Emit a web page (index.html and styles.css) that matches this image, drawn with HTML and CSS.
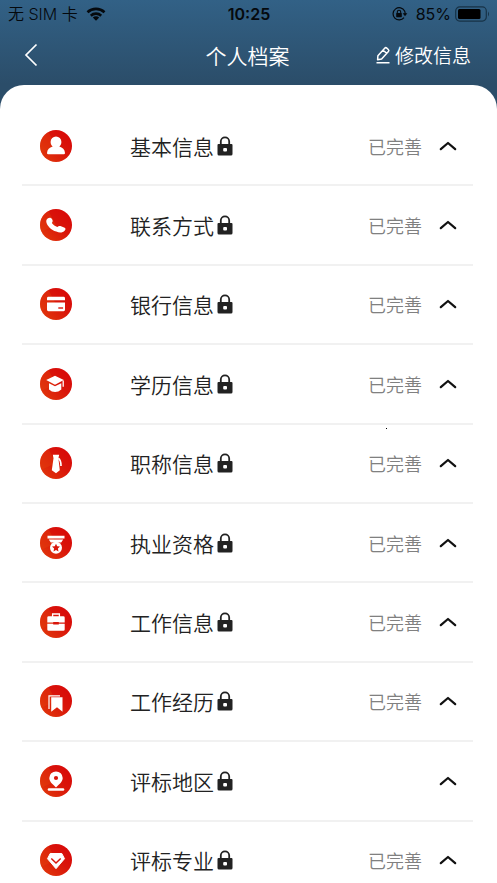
FILE: index.html
```html
<!DOCTYPE html>
<html lang="zh-CN">
<head>
<meta charset="utf-8">
<meta name="viewport" content="width=device-width, initial-scale=1">
<title>个人档案</title>
<link rel="stylesheet" href="styles.css">
</head>
<body>
<svg class="defs" aria-hidden="true">
  <defs>
    <linearGradient id="red" x1="1" y1="0" x2="0" y2="1">
      <stop offset="0" stop-color="#d80508"/>
      <stop offset=".45" stop-color="#d9150a"/>
      <stop offset="1" stop-color="#e23c0b"/>
    </linearGradient>
    <symbol id="disc" viewBox="0 0 32 32">
      <circle cx="16" cy="16" r="16" fill="url(#red)"/>
      <path d="M16 16 8.500 1.900A16 16 0 0 0 1.500 22.800Z" fill="#e4400c" opacity=".4"/>
    </symbol>
    <symbol id="lock" viewBox="0 0 16 20">
      <path d="M3.800 9V5.600a4.200 4.200 0 0 1 8.400 0V9" fill="none" stroke="#222" stroke-width="1.800"/>
      <path d="M1.500 8h13a1 1 0 0 1 1 1v9a1.500 1.500 0 0 1-1.500 1.500H2A1.500 1.500 0 0 1 .5 18V9a1 1 0 0 1 1-1Z" fill="#222"/>
      <rect x="6.200" y="12" width="3.800" height="3.600" rx="1" fill="#fff"/>
    </symbol>
    <symbol id="up" viewBox="0 0 18 10">
      <path d="M1.800 8.200 9 2l7.200 6.200" fill="none" stroke="#111" stroke-width="2.200" stroke-linecap="round" stroke-linejoin="round"/>
    </symbol>
  </defs>
</svg>
<div class="app">
  <header class="top">
    <div class="status">
      <div class="carrier"><span>无 SIM 卡</span>
        <svg width="20" height="14" viewBox="0 0 20 14"><g fill="none" stroke="#05090d" stroke-width="2.600"><path d="M1.500 5.300a12.300 12.300 0 0 1 17 0"/><path d="M4.800 8.700a7.600 7.600 0 0 1 10.400 0"/></g><path d="M10 13.700 6.800 10.600a4.600 4.600 0 0 1 6.400 0Z" fill="#05090d"/></svg>
      </div>
      <time class="clock">10:25</time>
      <div class="power">
        <svg width="16" height="14" viewBox="0 0 16 14"><path d="M12.600 4A6.100 6.100 0 1 0 12 10.600M12.600 4Q13.300 5.500 13 7" fill="none" stroke="#05090d" stroke-width="1.200"/><path d="M10.700 6.300h4.600L13 9.200Z" fill="#05090d"/><path d="M5.300 6.500V5a1.700 1.700 0 0 1 3.400 0v1.500" fill="none" stroke="#05090d" stroke-width="1.100"/><rect x="4.200" y="6" width="5.600" height="4.200" rx=".6" fill="#05090d"/></svg>
        <span>85%</span>
        <svg width="35" height="16" viewBox="0 0 35 16"><rect x=".7" y=".9" width="30.600" height="14.200" rx="4" fill="none" stroke="#173247" stroke-width="1.200"/><rect x="3" y="3" width="22.500" height="10" rx="1.500" fill="#000"/><path d="M33 5.500q2 2.500 0 5Z" fill="#173247"/></svg>
      </div>
    </div>
    <nav class="bar">
      <button class="back" type="button" aria-label="返回"><svg width="14" height="24" viewBox="0 0 14 24"><path d="M12.500 1.500 2 12l10.500 10.500" fill="none" stroke="#fff" stroke-width="1.700"/></svg></button>
      <h1>个人档案</h1>
      <button class="edit" type="button"><svg width="16" height="18" viewBox="0 0 16 18"><path d="M2.600 13.700 2.900 9.800 9.700 2.200a1.500 1.500 0 0 1 2.100-.1l1.500 1.400a1.500 1.500 0 0 1 .1 2.100L6.600 13.100ZM8.200 4.200l3.400 3.100M1.500 16.700h13" fill="none" stroke="#fff" stroke-width="1.500" stroke-linejoin="round"/></svg><span>修改信息</span></button>
    </nav>
  </header>
  <main class="sheet">
    <ul class="list">
      <li><button class="row" type="button"><svg class="icon" viewBox="0 0 32 32"><use href="#disc"/><path d="M16 6.500a5.400 5.400 0 0 1 5.400 5.400c0 2.200-1 3.600-2.100 4.700 3.300.8 5.400 3.200 5.700 6.300q0 1.300-1.200 1.300H8.200Q7 24.200 7 22.900c.3-3.100 2.400-5.500 5.700-6.300-1.100-1.100-2.100-2.500-2.100-4.700A5.400 5.400 0 0 1 16 6.500Z" fill="#fff"/></svg><span class="name">基本信息<svg class="lock"><use href="#lock"/></svg></span><span class="state">已完善</span><svg class="chevron"><use href="#up"/></svg></button></li>
      <li><button class="row" type="button"><svg class="icon" viewBox="0 0 32 32"><use href="#disc"/><path d="M8 9.300c1.600-1 3.300-.5 4.100 1 .8 1.400.8 2.300-.2 3.500-.3.500 2.700 3.500 5.500 4.200.8-.8 1.700-1.300 3-.9l3.700 1.300c1.700.6 1.700 1.900.7 3-2 2.200-4.900 2.700-8.500 1.200-5.100-1.800-9.200-5.700-10-9.700-.2-1.500.4-2.800 1.700-3.600Z" fill="#fff"/></svg><span class="name">联系方式<svg class="lock"><use href="#lock"/></svg></span><span class="state">已完善</span><svg class="chevron"><use href="#up"/></svg></button></li>
      <li><button class="row" type="button"><svg class="icon" viewBox="0 0 32 32"><use href="#disc"/><path d="M7 12.300V10.200Q7 8.800 8.400 8.800h15.200q1.400 0 1.400 1.400v2.100ZM7 14.500h18v7.300q0 1.400-1.400 1.400H8.400Q7 23.200 7 21.800Z" fill="#fff"/><path d="M18.300 20h4.800" stroke="#d9150a" stroke-width="1.400"/></svg><span class="name">银行信息<svg class="lock"><use href="#lock"/></svg></span><span class="state">已完善</span><svg class="chevron"><use href="#up"/></svg></button></li>
      <li><button class="row" type="button"><svg class="icon" viewBox="0 0 32 32"><use href="#disc"/><path d="m15 7.800 8.800 4.300-8.800 4.700-8.800-4.700ZM9 15.200l6 3.100 6.300-3.100v6.200q-2.800 2.600-6.200 2.600T9 21.400Z" fill="#fff"/><path d="M23.200 12.500v6.300" stroke="#fff" stroke-width="1.300"/></svg><span class="name">学历信息<svg class="lock"><use href="#lock"/></svg></span><span class="state">已完善</span><svg class="chevron"><use href="#up"/></svg></button></li>
      <li><button class="row" type="button"><svg class="icon" viewBox="0 0 32 32"><use href="#disc"/><path d="M12.800 7.800h6.400l-.8 3.400 1.400 12-3.800 3-4.200-3 1.700-12Z" fill="#fff"/><path d="M18.300 11.200q2.700 1.800 2.700 7.800" fill="none" stroke="#fff" stroke-width="1.700"/></svg><span class="name">职称信息<svg class="lock"><use href="#lock"/></svg></span><span class="state">已完善</span><svg class="chevron"><use href="#up"/></svg></button></li>
      <li><button class="row" type="button"><svg class="icon" viewBox="0 0 32 32"><use href="#disc"/><path d="M7.500 8.700h17v2.800h-17ZM8.800 12.600h14.400l-2 3H10.800Z" fill="#fff"/><circle cx="16" cy="20.700" r="6" fill="#fff"/><path d="m16 16.700 1.200 2.600 2.800.3-2.100 2 .6 2.800-2.500-1.400-2.500 1.400.6-2.800-2.100-2 2.800-.3Z" fill="#d9150a"/></svg><span class="name">执业资格<svg class="lock"><use href="#lock"/></svg></span><span class="state">已完善</span><svg class="chevron"><use href="#up"/></svg></button></li>
      <li><button class="row" type="button"><svg class="icon" viewBox="0 0 32 32"><use href="#disc"/><path d="M12.600 11V8h6.800v3" fill="none" stroke="#fff" stroke-width="1.300"/><path d="M8.700 10.200h14.600q1.400 0 1.400 1.400v4.900H7.300v-4.900q0-1.400 1.400-1.400ZM7.300 17.700h17.400v5.800q0 1.300-1.400 1.300H8.700q-1.400 0-1.400-1.300Z" fill="#fff"/><path d="M13.200 15.900h5.600v2.600h-5.600Z" fill="#d9150a"/></svg><span class="name">工作信息<svg class="lock"><use href="#lock"/></svg></span><span class="state">已完善</span><svg class="chevron"><use href="#up"/></svg></button></li>
      <li><button class="row" type="button"><svg class="icon" viewBox="0 0 32 32"><use href="#disc"/><path d="M9 24V10.800h11" fill="none" stroke="#fff" stroke-width="1.200"/><path d="M11.200 12.300h11.300v14.500L17 22.300l-5.800 4.500Z" fill="#fff"/></svg><span class="name">工作经历<svg class="lock"><use href="#lock"/></svg></span><span class="state">已完善</span><svg class="chevron"><use href="#up"/></svg></button></li>
      <li><button class="row" type="button"><svg class="icon" viewBox="0 0 32 32"><use href="#disc"/><path d="M16 6.400a6.700 6.700 0 0 1 6.700 6.700c0 3.700-3.400 6.200-6.700 9.400-3.300-3.200-6.700-5.700-6.700-9.400A6.700 6.700 0 0 1 16 6.400Z" fill="#fff"/><circle cx="16" cy="13" r="2.100" fill="#d9150a"/><path d="M9 24.500h14" stroke="#fff" stroke-width="2.600" stroke-linecap="round"/></svg><span class="name">评标地区<svg class="lock"><use href="#lock"/></svg></span><svg class="chevron"><use href="#up"/></svg></button></li>
      <li><button class="row" type="button"><svg class="icon" viewBox="0 0 32 32"><use href="#disc"/><path d="M10.200 9.500h11.600l2.700 5.200L16 24.700 7.500 14.700Z" fill="#fff" stroke="#fff" stroke-linejoin="round"/><path d="m11.300 14.500 4.700 4.500 4.700-4.500" fill="none" stroke="#d9150a" stroke-width="1.500"/></svg><span class="name">评标专业<svg class="lock"><use href="#lock"/></svg></span><span class="state">已完善</span><svg class="chevron"><use href="#up"/></svg></button></li>
    </ul>
    <span class="speck"></span>
  </main>
</div>
</body>
</html>
```
FILE: styles.css
```css
* {
  box-sizing: border-box;
}

body {
  margin: 0;
  font-family: "Noto Sans CJK SC", sans-serif;
  color: #222;
}

button {
  margin: 0;
  padding: 0;
  border: 0;
  background: none;
  color: inherit;
  font: inherit;
}

svg {
  display: block;
  flex: none;
}

.defs {
  position: absolute;
  width: 0;
  height: 0;
}

.app {
  display: flex;
  flex-direction: column;
  height: 100vh;
  overflow: hidden;
  background: linear-gradient(#326186, #2b4d69 84px, #2b4d69);
}

.top {
  flex: none;
}

.status {
  display: grid;
  grid-template-columns: 1fr auto 1fr;
  align-items: center;
  height: 28px;
  padding: 0 7px 0 8px;
  color: #05090d;
  font-family: Inter, "Noto Sans CJK SC", sans-serif;
  font-size: 16px;
  line-height: 20px;
}

.carrier,
.power {
  display: flex;
  align-items: center;
  gap: 8px;
}

.carrier {
  font-weight: 350;
}

.power {
  justify-content: flex-end;
}

.power span {
  margin-right: -4px;
}

.clock {
  font-weight: 600;
}

.bar {
  display: grid;
  grid-template-columns: 1fr auto 1fr;
  align-items: center;
  height: 57px;
  padding: 0 26px 3px 24px;
  color: #fff;
}

.back {
  justify-self: start;
}

h1 {
  margin: 0;
  font-size: 21px;
  font-weight: 350;
  line-height: 30px;
}

.edit {
  display: flex;
  align-items: center;
  justify-self: end;
  gap: 4px;
  font-size: 19px;
  font-weight: 350;
  line-height: 28px;
}

.sheet {
  position: relative;
  flex: 1;
  min-height: 0;
  padding: 22px 24px 0 22px;
  overflow-y: auto;
  scrollbar-width: none;
  border-radius: 24px 24px 0 0;
  background: #fff;
}

.list {
  display: grid;
  grid-auto-rows: 1fr;
  height: 794px;
  margin: 0;
  padding: 0;
  list-style: none;
}

.list li {
  border-bottom: 2px solid #f1f1f1;
}

.row {
  display: flex;
  align-items: center;
  width: 100%;
  height: 100%;
  padding: 0 16px 0 18px;
  text-align: left;
}

.icon {
  width: 32px;
  height: 32px;
  margin-right: 58px;
}

.name {
  display: flex;
  flex: 1;
  align-items: center;
  gap: 3px;
  font-size: 21px;
  font-weight: 350;
  line-height: 30px;
}

.lock {
  width: 16px;
  height: 20px;
}

.state {
  margin-right: 17px;
  color: #808080;
  font-size: 18px;
  font-weight: 350;
  line-height: 26px;
}

.chevron {
  width: 18px;
  height: 10px;
}

.speck {
  position: absolute;
  top: 343px;
  left: 386px;
  width: 1px;
  height: 1px;
  background: #000;
}
```
